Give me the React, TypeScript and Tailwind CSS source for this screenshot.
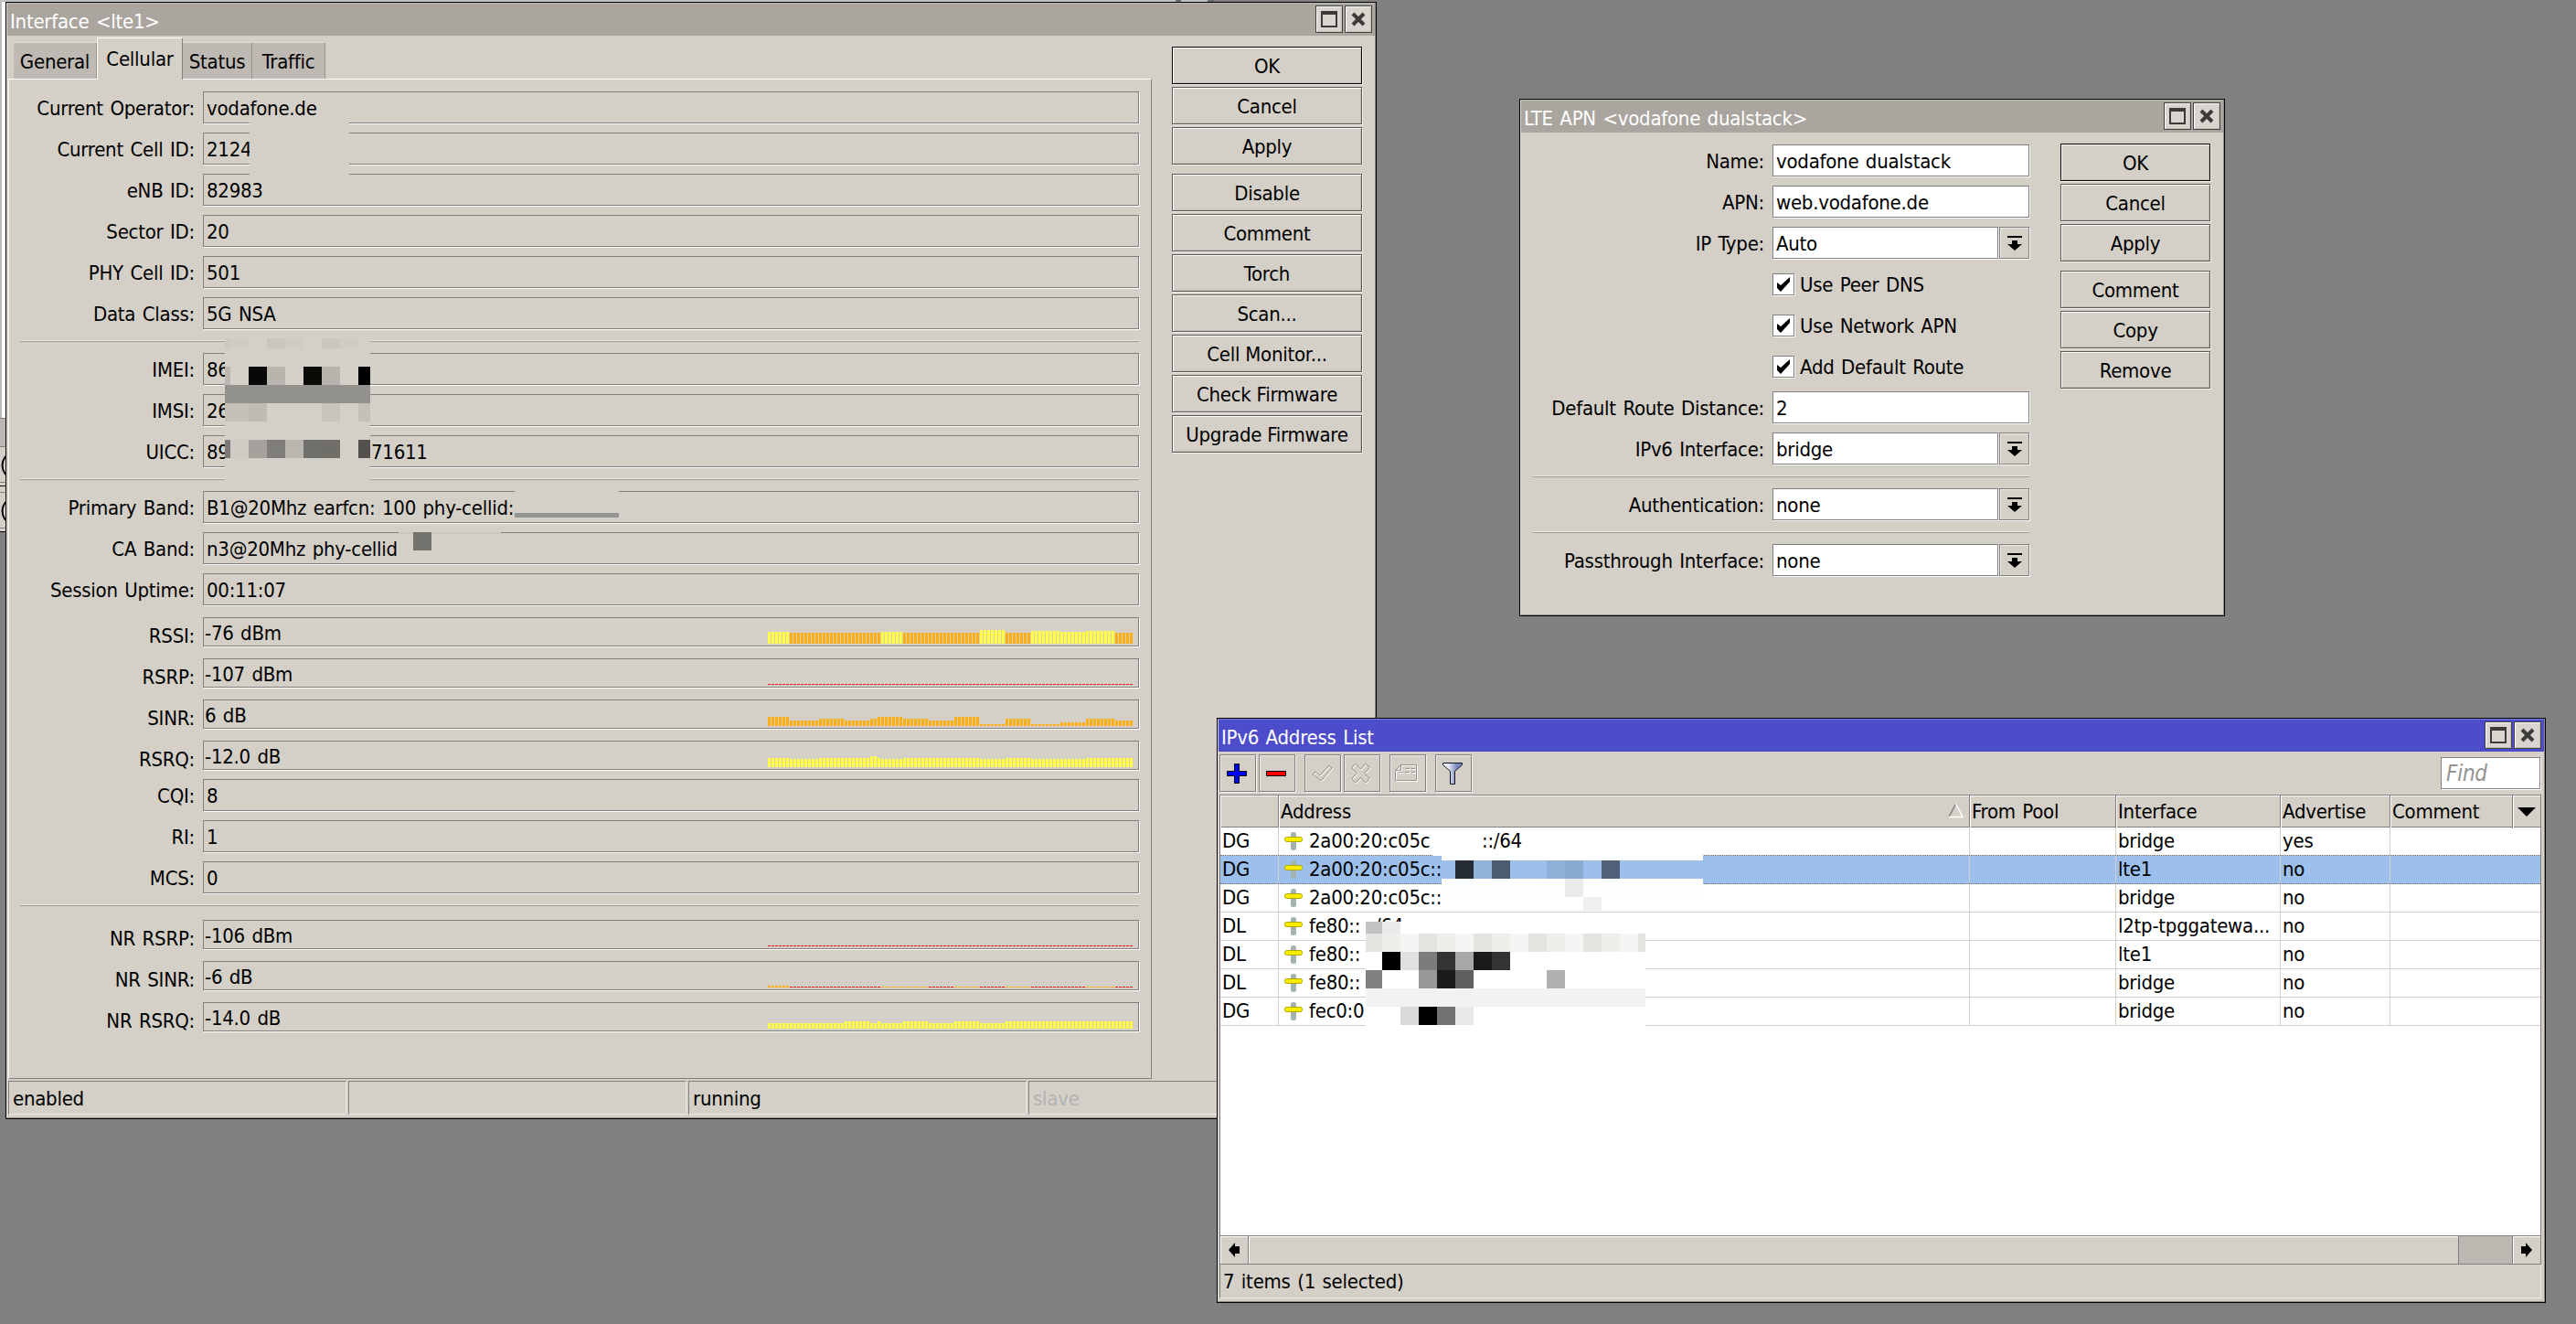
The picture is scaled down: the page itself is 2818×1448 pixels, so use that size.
import React from 'react';

// [count, height, colour] runs of the signal history
type Run = [number, number, string];

const Y = '#ffff40';
const O = '#ffb010';
const R = '#f41414';

type Item =
  | { kind: 'row'; label: string; value: React.ReactNode }
  | { kind: 'graph'; label: string; value: string; runs: Run[] }
  | { kind: 'sep' };

const cellular: Item[] = [
  { kind: 'row', label: 'Current Operator:', value: 'vodafone.de' },
  { kind: 'row', label: 'Current Cell ID:', value: '2124' },
  { kind: 'row', label: 'eNB ID:', value: '82983' },
  { kind: 'row', label: 'Sector ID:', value: '20' },
  { kind: 'row', label: 'PHY Cell ID:', value: '501' },
  { kind: 'row', label: 'Data Class:', value: '5G NSA' },
  { kind: 'sep' },
  { kind: 'row', label: 'IMEI:', value: '86' },
  { kind: 'row', label: 'IMSI:', value: '26' },
  {
    kind: 'row',
    label: 'UICC:',
    value: (
      <span className="flex">
        <span className="w-[180px]">89</span>
        <span>71611</span>
      </span>
    ),
  },
  { kind: 'sep' },
  { kind: 'row', label: 'Primary Band:', value: 'B1@20Mhz earfcn: 100 phy-cellid:' },
  { kind: 'row', label: 'CA Band:', value: 'n3@20Mhz phy-cellid' },
  { kind: 'row', label: 'Session Uptime:', value: '00:11:07' },
  {
    kind: 'graph',
    label: 'RSSI:',
    value: '-76 dBm',
    runs: [[6, 13, Y], [25, 12, O], [6, 13, Y], [21, 12, O], [7, 15, Y], [7, 12, O], [8, 14, Y], [7, 13, Y], [8, 14, Y], [5, 12, O]],
  },
  { kind: 'graph', label: 'RSRP:', value: '-107 dBm', runs: [[100, 1, R]] },
  {
    kind: 'graph',
    label: 'SINR:',
    value: '6 dB',
    runs: [[6, 10, O], [8, 6, O], [7, 8, O], [7, 6, O], [2, 8, O], [7, 10, O], [7, 8, O], [7, 6, O], [7, 10, O], [7, 2, O], [7, 8, O], [8, 2, O], [7, 4, O], [8, 8, O], [5, 6, O]],
  },
  {
    kind: 'graph',
    label: 'RSRQ:',
    value: '-12.0 dB',
    runs: [[6, 10, Y], [8, 9, Y], [14, 10, Y], [2, 12, Y], [1, 10, Y], [6, 9, Y], [21, 10, Y], [7, 9, Y], [7, 10, Y], [15, 9, Y], [13, 10, Y]],
  },
  { kind: 'row', label: 'CQI:', value: '8' },
  { kind: 'row', label: 'RI:', value: '1' },
  { kind: 'row', label: 'MCS:', value: '0' },
  { kind: 'sep' },
  { kind: 'graph', label: 'NR RSRP:', value: '-106 dBm', runs: [[100, 1, R]] },
  {
    kind: 'graph',
    label: 'NR SINR:',
    value: '-6 dB',
    runs: [[6, 2, O], [25, 1, R], [13, 1, O], [7, 1, R], [7, 1, O], [7, 1, R], [7, 1, O], [15, 1, R], [8, 1, O], [5, 1, R]],
  },
  {
    kind: 'graph',
    label: 'NR RSRQ:',
    value: '-14.0 dB',
    runs: [[21, 6, Y], [7, 8, Y], [2, 6, Y], [1, 8, Y], [6, 6, Y], [7, 8, Y], [7, 6, Y], [7, 8, Y], [7, 6, Y], [35, 8, Y]],
  },
];

const addresses = [
  { flags: 'DG', address: '2a00:20:c05c', rest: '::/64', iface: 'bridge', advertise: 'yes' },
  { flags: 'DG', address: '2a00:20:c05c::', rest: '', iface: 'lte1', advertise: 'no', selected: true },
  { flags: 'DG', address: '2a00:20:c05c::', rest: '', iface: 'bridge', advertise: 'no' },
  { flags: 'DL', address: 'fe80::', rest: '/64', iface: 'l2tp-tpggatewa...', advertise: 'no' },
  { flags: 'DL', address: 'fe80::', rest: '', iface: 'lte1', advertise: 'no' },
  { flags: 'DL', address: 'fe80::', rest: '', iface: 'bridge', advertise: 'no' },
  { flags: 'DG', address: 'fec0:0', rest: '', iface: 'bridge', advertise: 'no' },
];

// Pixelated patch over private data. Each row is [height, ...colours], '' is see-through.
const Mosaic = ({ className, cols, rows }: { className: string; cols: number[]; rows: [number, string[]][] }) => (
  <div className={`absolute flex flex-col ${className}`}>
    {rows.map(([height, cells], r) => (
      <div key={r} className="flex" style={{ height }}>
        {cols.map((width, c) => (
          <div key={c} style={{ width, backgroundColor: cells[c % cells.length] || undefined }}></div>
        ))}
      </div>
    ))}
  </div>
);

const TitleButton = ({ children }: { children: React.ReactNode }) => (
  <button className="w-[30px] h-[30px] border border-[#45433f] bg-[#d9d4ce] flex items-center justify-center shadow-[inset_1px_1px_0_#fff,inset_-1px_-1px_0_#c2bdb6]">
    {children}
  </button>
);

const Window = ({ title, className, active, children }: { title: string; className: string; active?: boolean; children: React.ReactNode }) => (
  <div className={`absolute border border-black ${className}`}>
    <div
      className={`w-full h-full flex flex-col border border-r-[#8f8c86] border-b-[#8f8c86] bg-[#d4d0c8] ${
        active ? 'border-t-[#7c7cd8] border-l-[#dedbd5]' : 'border-t-[#bab6b0] border-l-[#dedbd5]'
      }`}
    >
      <div className={`h-[35px] shrink-0 flex pl-[3px] pr-[3px] text-white ${active ? 'bg-[#4d4dcb]' : 'bg-[#aaa59e]'}`}>
        <span className="flex-1 leading-[39px]">{title}</span>
        <div className="flex gap-0.5 pt-0.5">
          <TitleButton>
            <svg width="18" height="18" viewBox="0 0 18 18">
              <path d="M0 0h18v18H0zM2 4v12h14V4z" fill="#3c3b38" fillRule="evenodd" />
            </svg>
          </TitleButton>
          <TitleButton>
            <svg width="16" height="16" viewBox="0 0 16 16">
              <path d="M2 2l12 12M14 2L2 14" stroke="#3c3b38" strokeWidth="4" />
            </svg>
          </TitleButton>
        </div>
      </div>
      {children}
    </div>
  </div>
);

const Button = ({ label, primary }: { label: string; primary?: boolean }) => (
  <button
    className={`h-[41px] w-full border pt-px leading-[37px] shadow-[1px_1px_0_#f4f3f0,inset_1px_1px_0_#fff,inset_-1px_-1px_0_#bfbbb4] ${
      primary ? 'border-black' : 'border-[#5c5b58]'
    }`}
  >
    {label}
  </button>
);

const Separator = ({ className }: { className: string }) => (
  <div className={`h-4 pt-0.5 ${className}`}>
    <div className="h-px bg-[#ebe9e5]"></div>
    <div className="h-px bg-[#9e9b95]"></div>
  </div>
);

const Tab = ({ label, className }: { label: string; className: string }) => (
  <div className={`h-10 border-t border-r border-t-[#dfdcd7] border-r-[#96938d] bg-[#beb9b2] text-center leading-[42px] ${className}`}>{label}</div>
);

const Graph = ({ runs }: { runs: Run[] }) => (
  <div className="w-[399px] mr-[6px] h-[28px] flex items-end gap-px">
    {runs.flatMap(([count, height, color], r) =>
      Array.from({ length: count }, (_, i) => (
        <div key={`${r}-${i}`} className="w-[3px]" style={{ height, backgroundColor: color }}></div>
      ))
    )}
  </div>
);

const InfoRow = ({ item }: { item: Item }) => {
  if (item.kind === 'sep') return <Separator className="ml-3 w-[1224px]" />;
  if (item.kind === 'graph') {
    return (
      <div className="h-[45px] flex gap-[9px]">
        <span className="w-[203px] text-right leading-[47px]">{item.label}</span>
        <div className="mt-[3px] w-[1024px] h-8 border border-[#808080] shadow-[1px_1px_0_#fff] flex justify-between">
          <span className="pl-px leading-[33px]">{item.value}</span>
          <Graph runs={item.runs} />
        </div>
      </div>
    );
  }
  return (
    <div className="h-[45px] flex gap-[9px]">
      <span className="w-[203px] text-right leading-[37px]">{item.label}</span>
      <div className="w-[1024px] h-[35px] pl-[3px] border border-[#808080] shadow-[1px_1px_0_#fff] leading-[35px]">{item.value}</div>
    </div>
  );
};

const InterfaceWindow = () => (
  <Window title="Interface <lte1>" className="left-[6px] top-[2px] w-[1500px] h-[1222px]">
    <div className="h-[1141px] flex pl-px">
      <div className="w-[1251px] pt-0.5 flex flex-col">
        <div className="flex items-end pl-1.5 h-[45px]">
          <Tab label="General" className="w-[91px]" />
          <div className="relative z-10 w-[94px] h-[46px] -mb-px border-t border-l border-r border-t-white border-l-white border-r-[#808080] bg-[#d4d0c8] text-center leading-[46px]">
            Cellular
          </div>
          <Tab label="Status" className="w-[76px]" />
          <Tab label="Traffic" className="w-[80px]" />
        </div>
        <div className="flex-1 pt-[13px] border border-t-white border-l-white border-r-[#808080] border-b-[#808080]">
          {cellular.map((item, index) => (
            <InfoRow key={index} item={item} />
          ))}
        </div>
      </div>
      <div className="ml-[22px] w-[208px] pt-3 flex flex-col gap-[3px]">
        <Button label="OK" primary />
        <Button label="Cancel" />
        <Button label="Apply" />
        <div className="h-1"></div>
        <Button label="Disable" />
        <Button label="Comment" />
        <Button label="Torch" />
        <Button label="Scan..." />
        <Button label="Cell Monitor..." />
        <Button label="Check Firmware" />
        <Button label="Upgrade Firmware" />
      </div>
    </div>
    <div className="flex gap-0.5 mt-0.5 pl-px h-[37px] leading-[37px]">
      {['enabled', '', 'running', 'slave'].map((state, index) => (
        <div
          key={index}
          className={`w-[370px] pl-1 border border-t-[#808080] border-l-[#808080] border-r-[#ebe9e5] border-b-[#ebe9e5] ${
            state === 'slave' ? 'text-[#b2b2b2]' : ''
          }`}
        >
          {state}
        </div>
      ))}
    </div>

    <Mosaic className="left-[266px] top-[123px]" cols={[109]} rows={[[66, ['#d4d0c8']]]} />
    <Mosaic
      className="left-[239px] top-[367px]"
      cols={[6, 20, 20, 20, 20, 20, 20, 20, 13]}
      rows={[
        [11, ['#cbc8c1', '#d0ccc4', '#d4d0c8', '#cac6be', '#d0ccc4', '#d4d0c8', '#cac6be', '#d0ccc4', '#d4d0c8']],
        [20, ['#d4d0c8']],
        [20, ['#bcb8b1', '#d4d0c8', '#080808', '#b8b5ae', '#d4d0c8', '#0a0a07', '#b9b3ad', '#d4d0c8', '#000000']],
        [20, ['#92918d']],
        [20, ['#c4bfb8', '#c4bfb8', '#c0bbb4', '#d4d0c8', '#d4d0c8', '#d4d0c8', '#c8c3bb', '#d4d0c8', '#c4bfb8']],
        [20, ['#d4d0c8']],
        [20, ['#7c7a76', '#cfcbc4', '#a5a19c', '#7f7d79', '#b9b5af', '#6f706b', '#706e69', '#d4d0c8', '#52514d']],
        [24, ['#d4d0c8']],
      ]}
    />
    <Mosaic className="left-[556px] top-[533px]" cols={[114]} rows={[[25, ['#d4d0c8']], [5, ['#949492']]]} />
    <Mosaic
      className="left-[429px] top-[579px]"
      cols={[16, 20, 76]}
      rows={[[2, ['#cbc7bf', '#73716c', '#cbc7bf']], [18, ['', '#73716c', '']]]}
    />
  </Window>
);

const FormRow = ({ label, value, select }: { label: string; value: string; select?: boolean }) => (
  <div className="h-[45px] flex">
    <span className="w-[266px] mr-[9px] text-right leading-[37px]">{label}</span>
    <div className="flex-1 h-[35px] pl-[3px] border border-[#808080] bg-white shadow-[1px_1px_0_#fff] leading-[35px]">{value}</div>
    {select && (
      <button className="ml-px w-[33px] h-[35px] border border-[#808080] flex items-center justify-center shadow-[1px_1px_0_#fff,inset_1px_1px_0_#ebe9e5]">
        <svg width="16" height="16" viewBox="0 0 16 16">
          <path d="M0 0h16v2H0zM5 5h6v4h5l-8 7-8-7h5z" />
        </svg>
      </button>
    )}
  </div>
);

const CheckRow = ({ label }: { label: string }) => (
  <div className="h-[45px] flex ml-[275px]">
    <div className="mt-1.5 w-6 h-6 border border-[#808080] bg-white shadow-[1px_1px_0_#fff] flex items-center justify-center">
      <svg width="14" height="16" viewBox="0 0 14 16">
        <path d="M0 6l4 3L14 0v5L4 16 0 12z" />
      </svg>
    </div>
    <span className="ml-[6px] leading-[37px]">{label}</span>
  </div>
);

const ApnWindow = () => (
  <Window title="LTE APN <vodafone dualstack>" className="left-[1662px] top-[108px] w-[772px] h-[566px]">
    <div className="flex">
      <div className="w-[556px] pt-[13px]">
        <FormRow label="Name:" value="vodafone dualstack" />
        <FormRow label="APN:" value="web.vodafone.de" />
        <FormRow label="IP Type:" value="Auto" select />
        <CheckRow label="Use Peer DNS" />
        <CheckRow label="Use Network APN" />
        <CheckRow label="Add Default Route" />
        <FormRow label="Default Route Distance:" value="2" />
        <FormRow label="IPv6 Interface:" value="bridge" select />
        <Separator className="ml-[13px]" />
        <FormRow label="Authentication:" value="none" select />
        <Separator className="ml-[13px]" />
        <FormRow label="Passthrough Interface:" value="none" select />
      </div>
      <div className="ml-[34px] w-[164px] pt-3 flex flex-col gap-[3px]">
        <Button label="OK" primary />
        <Button label="Cancel" />
        <Button label="Apply" />
        <div className="h-1"></div>
        <Button label="Comment" />
        <Button label="Copy" />
        <Button label="Remove" />
      </div>
    </div>
  </Window>
);

const ToolButton = ({ className = '', children }: { className?: string; children: React.ReactNode }) => (
  <button
    className={`w-10 h-[41px] border border-[#808080] flex items-center justify-center shadow-[1px_1px_0_#f4f3f0,inset_1px_1px_0_#ebe9e5] ${className}`}
  >
    {children}
  </button>
);

// Greyed-out icons are an outline with a white offset copy below
const Etched = ({ d, w, h }: { d: string; w: number; h: number }) => (
  <svg width={w} height={h} viewBox={`0 0 ${w} ${h}`} fill="none" strokeWidth="1">
    <path d={d} stroke="#ffffff" transform="translate(1 1)" />
    <path d={d} stroke="#96938d" />
  </svg>
);

const AddressIcon = () => (
  <svg width="20" height="20" viewBox="0 0 20 20">
    <rect x="7" y="0" width="6" height="20" rx="2.5" fill="#a3b3b0" />
    <rect x="0.5" y="5.5" width="19" height="5" rx="2" fill="#f8ec00" stroke="#b3a600" />
  </svg>
);

const HeaderCell = ({ label, children }: { label?: string; children?: React.ReactNode }) => (
  <div className="border-r border-[#808080] pl-[2px] flex justify-between shadow-[inset_1px_1px_0_#fff]">
    {label}
    {children}
  </div>
);

const AddressWindow = () => (
  <Window title="IPv6 Address List" active className="left-[1331px] top-[785px] w-[1454px] h-[640px]">
    <div className="h-[47px] flex pt-[3px] pl-px pr-[4px]">
      <ToolButton className="pr-0.5">
        <svg width="22" height="22" viewBox="0 0 22 22">
          <path d="M8.5.5h5v8h8v5h-8v8h-5v-8h-8v-5h8z" fill="#0000ff" stroke="#000" />
        </svg>
      </ToolButton>
      <ToolButton className="ml-[3px] pr-0.5">
        <svg width="22" height="6" viewBox="0 0 22 6">
          <path d="M.5.5h21v5H.5z" fill="#ff0000" stroke="#000" />
        </svg>
      </ToolButton>
      <ToolButton className="ml-[10px]">
        <Etched w={24} h={20} d="M1 11l3-3 5 4L19 1l3 3L10 18z" />
      </ToolButton>
      <ToolButton className="ml-[3px] pr-0.5">
        <Etched w={22} h={22} d="M4.5.5h1l5 5.500 5-5.500h1l3.500 3.500v1l-5.500 5.500 5.500 5.500v1l-3.500 3.500h-1l-5-5.500-5 5.500h-1L1 17v-1l5.500-5.500L1 5V4z" />
      </ToolButton>
      <ToolButton className="ml-[10px] pr-0.5">
        <Etched w={26} h={20} d="M6.5.5h17v17H.5v-11zM6.5.5v6H.5M12 4.5h4M18 4.5h4M4 8.5h5M11 8.5h5M18 8.5h4" />
      </ToolButton>
      <ToolButton className="ml-[10px] pr-0.5">
        <svg width="22" height="24" viewBox="0 0 22 24">
          <defs>
            <linearGradient id="funnel">
              <stop offset="0.25" stopColor="#f2f4fa" />
              <stop offset="0.7" stopColor="#7c8cc0" />
            </linearGradient>
          </defs>
          <path d="M.5.5h21v2l-8 7v14h-5v-14l-8-7z" fill="url(#funnel)" stroke="#10101c" />
        </svg>
      </ToolButton>
      <div className="ml-auto mt-[3px] w-[109px] h-[35px] pl-[5px] border border-[#808080] bg-white shadow-[1px_1px_0_#fff] italic text-[#929292] text-[24px] leading-[34px]">
        Find
      </div>
    </div>

    <div className="ml-px w-[1446px] h-[482px] border border-b-0 border-[#808080] bg-white">
      <div className="h-[35px] grid grid-cols-[64px_756px_160px_180px_120px_134px_30px] border-b border-[#808080] bg-[#d4d0c8] leading-[36px]">
        <HeaderCell />
        <HeaderCell label="Address">
          <svg width="18" height="18" viewBox="0 0 18 18" className="mt-2 mr-[5px]" fill="none">
            <path d="M8.5 1L1 15.5" stroke="#808080" strokeWidth="1.5" />
            <path d="M8.5 1L16 15.5H1" stroke="#fff" strokeWidth="1.5" />
          </svg>
        </HeaderCell>
        <HeaderCell label="From Pool" />
        <HeaderCell label="Interface" />
        <HeaderCell label="Advertise" />
        <HeaderCell label="Comment" />
        <div className="flex items-center justify-center shadow-[inset_1px_1px_0_#fff]">
          <svg width="20" height="10" viewBox="0 0 20 10">
            <path d="M0 0h20L10 10z" />
          </svg>
        </div>
      </div>
      {addresses.map((row, index) => (
        <div
          key={index}
          className={`h-[31px] grid grid-cols-[64px_756px_160px_180px_120px_164px] leading-[29px] *:border-r *:border-[#d4d0c8] *:last:border-r-0 *:pl-[2px] ${
            row.selected
              ? 'bg-[#9cbfeb] border-b border-dotted border-[#707070] relative before:absolute before:inset-x-0 before:-top-px before:border-t before:border-dotted before:border-[#707070]'
              : 'border-b border-[#d4d0c8]'
          }`}
        >
          <div>{row.flags}</div>
          <div className="flex">
            <span className="w-[31px] pl-1 pt-[5px] shrink-0">
              <AddressIcon />
            </span>
            <span className={row.rest === '/64' ? 'w-[72px]' : 'w-[189px]'}>{row.address}</span>
            <span>{row.rest}</span>
          </div>
          <div></div>
          <div>{row.iface}</div>
          <div>{row.advertise}</div>
          <div></div>
        </div>
      ))}
    </div>
    <div className="ml-px w-[1446px] h-8 flex border border-[#808080] bg-[#bcb8b1]">
      <div className="w-[30px] flex items-center justify-center bg-[#d4d0c8] shadow-[inset_1px_1px_0_#fff]">
        <svg width="12" height="16" viewBox="0 0 12 16">
          <path d="M0 8l7-8v4h5v8H7v4z" />
        </svg>
      </div>
      <div className="w-[1325px] border-l border-r border-[#808080] bg-[#d4d0c8] shadow-[inset_1px_1px_0_#fff]"></div>
      <div className="ml-auto w-[31px] border-l border-[#808080] flex items-center justify-center bg-[#d4d0c8] shadow-[inset_1px_1px_0_#fff]">
        <svg width="12" height="16" viewBox="0 0 12 16">
          <path d="M12 8L5 0v4H0v8h5v4z" />
        </svg>
      </div>
    </div>
    <div className="ml-px w-[1446px] h-[37px] pl-[3px] border-l border-r border-b border-l-[#808080] border-r-[#ebe9e5] border-b-[#ebe9e5] leading-[37px]">
      7 items (1 selected)
    </div>

    <Mosaic className="left-[235px] top-[149px]" cols={[10, 286]} rows={[[1, ['#ffffff', '#fdfefe']], [5, ['', '#fdfefe']]]} />
    <Mosaic
      className="left-[245px] top-[155px]"
      cols={[15, 20, 20, 20, 40, 20, 20, 20, 20, 91]}
      rows={[
        [20, ['#9cbfeb', '#262c36', '#90b3dc', '#4b5c71', '#9cbfeb', '#91b0d9', '#8aa9d1', '#9cbfeb', '#4f6078', '#9cbfeb']],
        [20, ['#fdfefe', '#fdfefe', '#fdfefe', '#fdfefe', '#fdfefe', '#fdfefe', '#ebebea', '#fdfefe', '#fdfefe', '#fdfefe']],
        [15, ['', '', '', '', '', '', '', '#eef0ef', '', '']],
      ]}
    />
    <Mosaic
      className="left-[162px] top-[222px]"
      cols={[18, 20, 20, 20, 20, 20, 20, 20, 20, 20, 20, 20, 20, 20, 20, 8]}
      rows={[
        [13, ['#c3c3c3', '#eaeaea', '#fff', '#fff', '#fff', '#fff', '#fff', '#fff', '#fff', '#fff', '#fff', '#fff', '#fff', '#fff', '#fff', '#fff']],
        [20, ['#e4e3de', '#efeeeb', '#f5f5f3']],
        [20, ['#fff', '#000', '#e0e0e0', '#7c7c7c', '#333', '#a8a8a8', '#1a1a1a', '#333', '#fff', '#fff', '#fff', '#fff', '#fff', '#fff', '#fff', '#fff']],
        [20, ['#808080', '#fff', '#fff', '#989898', '#1a1a1a', '#606060', '#fff', '#fff', '#fff', '#fff', '#b0b0b0', '#fff', '#fff', '#fff', '#fff', '#fff']],
        [20, ['#f3f2f0']],
        [20, ['#fff', '#fff', '#d9d9d9', '#000', '#727272', '#e8e8e8', '#fff', '#fff', '#fff', '#fff', '#fff', '#fff', '#fff', '#fff', '#fff', '#fff']],
        [4, ['#fff']],
      ]}
    />
  </Window>
);

// Slivers of the windows that lie behind the interface dialog
const BackWindows = () => (
  <div className="absolute left-0 top-0">
    <div className="flex h-[2px]">
      <div className="w-[1286px] bg-[#bfc2c2]"></div>
      <div className="w-[6px] bg-[#6a6a6a]"></div>
      <div className="w-[29px] bg-[#bfc2c2]"></div>
      <div className="w-[7px] bg-[#6a6a6a]"></div>
    </div>
    <div className="w-[6px] h-[455px] border-l-2 border-[#bdbdbd] bg-white"></div>
    <div className="w-[6px] h-[31px] border-t border-[#808080] bg-[#bcb8b1]"></div>
    {[0, 1].map((i) => (
      <div key={i} className={i === 0 ? 'w-[6px] h-[44px] bg-[#d4d0c8] border-t border-b border-t-[#808080] border-b-black' : 'w-[6px] h-[50px] pt-[6px] bg-[#d4d0c8] border-b border-black'}>
        <div className={i === 0 ? 'h-[39px] pt-[9px] border-b border-[#808080]' : 'h-[40px] pt-[9px] border-t border-b border-[#808080]'}>
          <svg width="6" height="22" viewBox="0 0 6 22" fill="none">
            <path d="M6 1Q-1 11 6 21" stroke="#000" strokeWidth="2" />
          </svg>
        </div>
      </div>
    ))}
  </div>
);

const App = () => {
  return (
    <div className="relative w-[2818px] h-[1448px] overflow-hidden bg-[#808080] text-black whitespace-nowrap text-[22px] tracking-[-0.25px] [word-spacing:1.5px] font-['DejaVu_Sans_Condensed','DejaVu_Sans',sans-serif]">
      <BackWindows />
      <InterfaceWindow />
      <ApnWindow />
      <AddressWindow />
    </div>
  );
};

export default App;
